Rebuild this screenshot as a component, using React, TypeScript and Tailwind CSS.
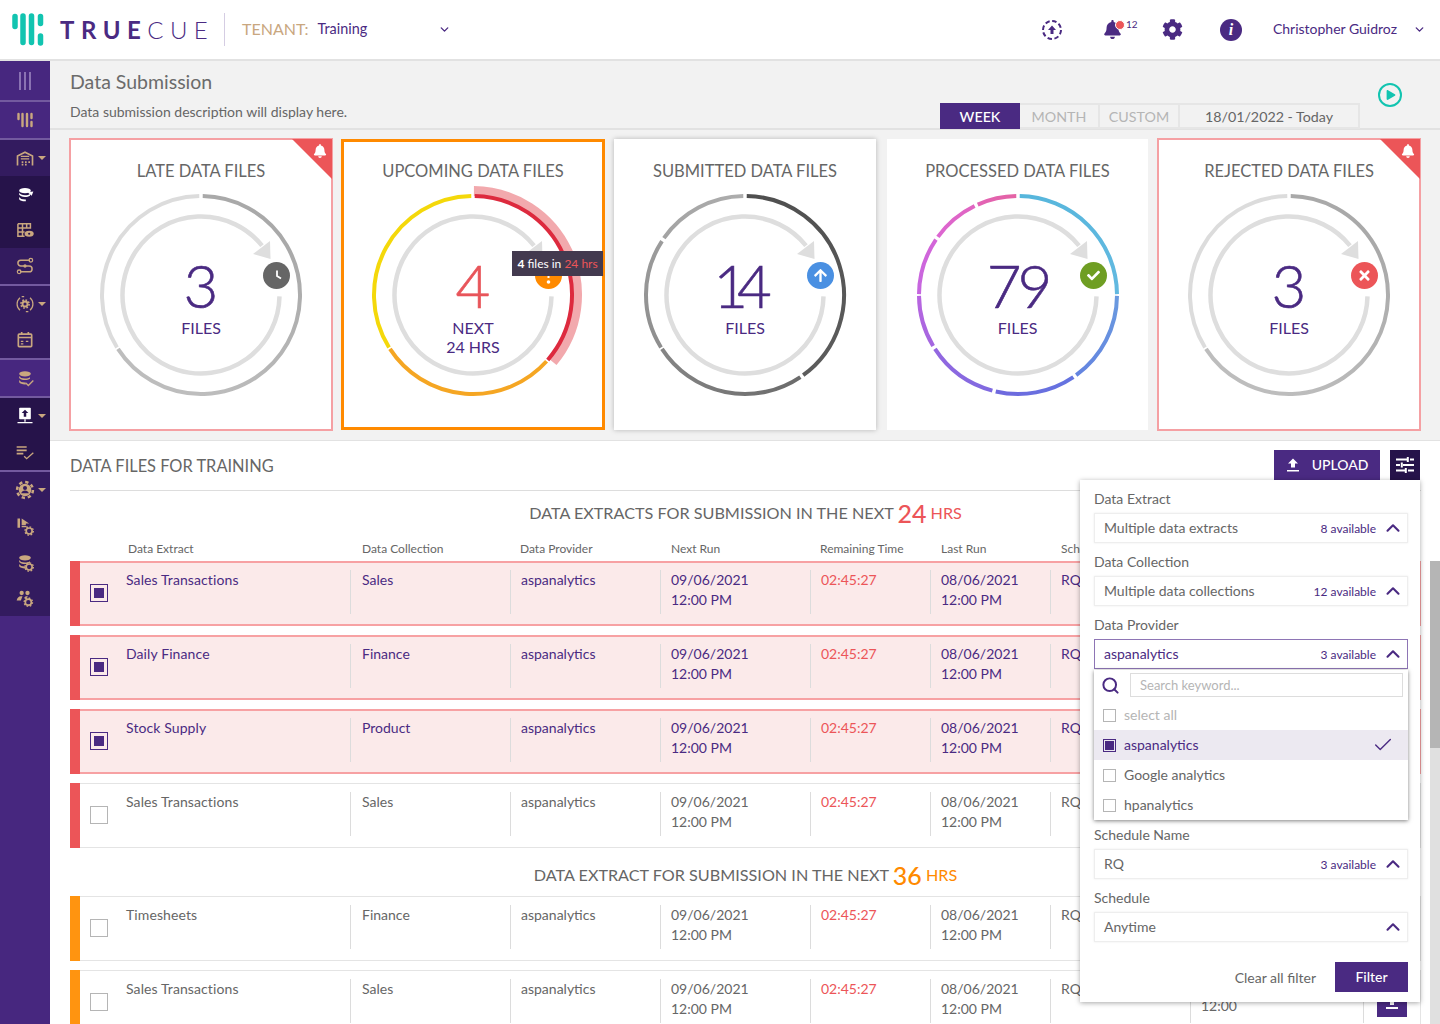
import React from 'react';
import { FaBell, FaCog, FaCheck, FaArrowUp, FaTimes, FaPlay } from 'react-icons/fa';
import { ChevronDown, ChevronUp, Search, Check } from 'lucide-react';

const PURPLE = '#4a2a82';
const TAN = '#c9a77f';

const polar = (r: number, deg: number) => {
  const a = ((deg - 90) * Math.PI) / 180;
  return [115 + r * Math.cos(a), 115 + r * Math.sin(a)];
};

const arc = (r: number, from: number, to: number) => {
  const [x1, y1] = polar(r, from);
  const [x2, y2] = polar(r, to);
  return `M${x1} ${y1}A${r} ${r} 0 ${to - from > 180 ? 1 : 0} 1 ${x2} ${y2}`;
};

type Seg = { from: number; to: number; c1: string; c2?: string; r?: number; w?: number };

const Gauge = ({ id, segs }: { id: string; segs: Seg[] }) => (
  <svg width="230" height="230" viewBox="0 0 230 230" className="block">
    <defs>
      {segs.map((s, i) => {
        const [x1, y1] = polar(s.r ?? 99, s.from);
        const [x2, y2] = polar(s.r ?? 99, s.to);
        return (
          <linearGradient key={i} id={`${id}${i}`} gradientUnits="userSpaceOnUse" x1={x1} y1={y1} x2={x2} y2={y2}>
            <stop offset="0" stopColor={s.c1} />
            <stop offset="1" stopColor={s.c2 ?? s.c1} />
          </linearGradient>
        );
      })}
    </defs>
    {segs.map((s, i) => (
      <path key={i} d={arc(s.r ?? 99, s.from, s.to)} fill="none" stroke={`url(#${id}${i})`} strokeWidth={s.w ?? 4} />
    ))}
    <path d={arc(78.5, 91, 411)} fill="none" stroke="#dedede" strokeWidth="4.5" />
    <path d="M184 61 L184.5 79 L167 74 Z" fill="#dedede" />
  </svg>
);

const StatusDot = ({ className, children }: { className: string; children: React.ReactNode }) => (
  <div className={`absolute left-[177px] top-[82px] w-[27px] h-[27px] rounded-full flex items-center justify-center text-white ${className}`}>
    {children}
  </div>
);

const Corner = () => (
  <div className="absolute top-0 right-0 w-[40px] h-[40px] bg-[#ec5558] [clip-path:polygon(0_0,100%_0,100%_100%)]">
    <FaBell className="absolute top-[5px] right-[5px] text-white" size={14} />
  </div>
);

const Center = ({ n, lines, color = 'text-[#4a2a82]', nClass = '' }: { n: string; lines: string[]; color?: string; nClass?: string }) => (
  <div className="absolute left-0 right-0 top-[75px] text-center">
    <div className={`text-[60px] leading-[60px] font-light [-webkit-text-stroke:0.6px_currentColor] ${color} ${nClass}`}>{n}</div>
    <div className="mt-[3px] text-[16px] leading-[19px] text-[#4a2a82]">
      {lines.map((l) => (
        <div key={l}>{l}</div>
      ))}
    </div>
  </div>
);

const Card = ({ title, className, alert, children }: { title: string; className: string; alert?: boolean; children: React.ReactNode }) => (
  <div className={`relative h-[291px] flex flex-col items-center bg-white ${className}`}>
    {alert && <Corner />}
    <div className="h-[41px] pt-[21px] text-[16.5px] leading-[22px] text-[#666] whitespace-nowrap">{title}</div>
    <div className="relative w-[230px] h-[230px]">{children}</div>
  </div>
);

const Sb = ({ children, size = 20 }: { children: React.ReactNode; size?: number }) => (
  <svg width={size} height={size} viewBox="0 0 24 24" className="block">
    {children}
  </svg>
);

const SmallGear = ({ x, y, c = TAN }: { x: number; y: number; c?: string }) => (
  <g>
    <circle cx={x} cy={y} r="3.6" fill="none" stroke={c} strokeWidth="2" />
    <circle cx={x} cy={y} r="5" fill="none" stroke={c} strokeWidth="1.6" strokeDasharray="2 1.9" />
  </g>
);

const Db = ({ c = TAN }: { c?: string }) => (
  <g fill={c}>
    <ellipse cx="10" cy="6" rx="7" ry="3.2" />
    <path d="M3 8.500c1 2 3.600 3 7 3 3 0 4.500-.500 6-1.500v2c-1.500 1-3.500 1.500-6 1.500-3.400 0-6-1-7-2.500z" />
    <path d="M3 13.500c1 2 3.600 3 7 3l1 0v2.200l-1 .1c-3.400 0-6-1-7-2.600z" />
  </g>
);

const sideIcons: Record<string, React.ReactNode> = {
  menu: (
    <Sb size={24}>
      <path d="M7 3v18M12 3v18M17 3v18" stroke="#9b86c0" strokeWidth="1.6" />
    </Sb>
  ),
  logo: (
    <Sb size={24}>
      <path d="M5.500 6v5M9.500 6v12M14 6v12M18.500 6v4M18.500 14v4" stroke={TAN} strokeWidth="2.400" strokeLinecap="round" />
    </Sb>
  ),
  warehouse: (
    <Sb>
      <path d="M3 21V9.500L12 5l9 4.500V21" fill="none" stroke={TAN} strokeWidth="2" />
      <path d="M7 10h10M7 13h10" stroke={TAN} strokeWidth="1.500" />
      <path d="M8 16h2v2H8zM12 16h2v2h-2zM16 16h2v2h-2zM8 19h2v2H8zM12 19h2v2h-2z" fill={TAN} />
    </Sb>
  ),
  db: (
    <Sb>
      <g transform="translate(2 2)">
        <Db c="#fff" />
      </g>
      <path d="M15 10l7-1-2 5z" fill="#fff" />
    </Sb>
  ),
  grid: (
    <Sb>
      <path d="M3.500 4.500h15v6M3.500 4.500v15h8M3.500 9.500h15M3.500 14.500h8M9 4.500v15M14 4.500v5" fill="none" stroke={TAN} strokeWidth="1.800" />
      <ellipse cx="17" cy="16.500" rx="5.500" ry="3.500" fill={TAN} />
      <circle cx="17" cy="16.500" r="1.300" fill="#26134a" />
    </Sb>
  ),
  route: (
    <Sb>
      <path d="M6 19h11a3.200 3.200 0 0 0 0-7H7a3.200 3.200 0 0 1 0-7h11" fill="none" stroke={TAN} strokeWidth="1.800" />
      <circle cx="19" cy="5" r="2.200" fill="none" stroke={TAN} strokeWidth="1.500" />
      <circle cx="12" cy="12" r="2" fill={TAN} />
      <circle cx="5" cy="19" r="2.200" fill="none" stroke={TAN} strokeWidth="1.500" />
    </Sb>
  ),
  gearRing: (
    <Sb>
      <path d="M6 4.500A9.800 9.800 0 0 0 6 19.500M18 4.500A9.800 9.800 0 0 1 18 19.500M8 3l3 0M13 21l3 0" fill="none" stroke={TAN} strokeWidth="1.500" />
      <g transform="translate(6 6) scale(.75)">
        <circle cx="8" cy="8" r="4" fill="none" stroke={TAN} strokeWidth="3" />
        <circle cx="8" cy="8" r="6.500" fill="none" stroke={TAN} strokeWidth="2.600" strokeDasharray="2.600 2.500" />
      </g>
    </Sb>
  ),
  calendar: (
    <Sb>
      <rect x="4" y="5" width="16" height="15" rx="1" fill="none" stroke={TAN} strokeWidth="2" />
      <path d="M4 9h16M8 2.500V6M16 2.500V6" stroke={TAN} strokeWidth="2" />
      <path d="M7 13h3v1.500H7zM13 13h3v1.500h-3zM7 16h3v1.500H7z" fill={TAN} />
    </Sb>
  ),
  dbCheck: (
    <Sb>
      <g transform="translate(2 1)">
        <Db />
      </g>
      <path d="M13 18l3 3 6-6" fill="none" stroke={TAN} strokeWidth="1.600" />
    </Sb>
  ),
  upload: (
    <Sb>
      <rect x="5" y="2" width="14" height="14" rx="1" fill="#fff" />
      <path d="M12 4.500l4 4h-2.500V13h-3V8.500H8z" fill="#26134a" />
      <path d="M12 16v3M3 20h18" stroke="#fff" strokeWidth="1.600" />
    </Sb>
  ),
  listCheck: (
    <Sb>
      <path d="M2 6h12M2 10h12M2 14h8" stroke={TAN} strokeWidth="2" />
      <path d="M11 17l3 3 8-7" fill="none" stroke={TAN} strokeWidth="1.600" />
    </Sb>
  ),
  gearUser: (
    <Sb>
      <circle cx="12" cy="12" r="7.500" fill={TAN} />
      <circle cx="12" cy="12" r="9.500" fill="none" stroke={TAN} strokeWidth="3" strokeDasharray="4 3.450" />
      <circle cx="12" cy="9.500" r="2.400" fill="#331b5f" />
      <path d="M7.500 16c.5-2.500 2.500-3.500 4.500-3.500s4 1 4.500 3.500z" fill="#331b5f" />
    </Sb>
  ),
  flagGear: (
    <Sb>
      <path d="M3 3h3v11H3zM8 3l9 6h-4v2H8z" fill={TAN} />
      <path d="M8 12h6v1.500H8z" fill={TAN} />
      <SmallGear x={17} y={18} />
    </Sb>
  ),
  dbGear: (
    <Sb>
      <g transform="translate(2 1)">
        <Db />
      </g>
      <SmallGear x={17} y={18} />
    </Sb>
  ),
  usersGear: (
    <Sb>
      <circle cx="8" cy="6" r="2.600" fill={TAN} />
      <circle cx="15" cy="6" r="2.600" fill={TAN} />
      <path d="M2 15c.5-3 2.500-5 5-5l2 0-2 5zM11 12c.5-1.500 2-2.500 4-2.500v1.500c-1.500.5-2 1.500-2.500 2.500z" fill={TAN} />
      <SmallGear x={16} y={17} />
    </Sb>
  ),
};

const sideItems = [
  { k: 'menu', h: 'h-[39px]', bg: 'bg-[#47277f]' },
  { k: 'line' },
  { k: 'logo', h: 'h-[36px]', bg: 'bg-[#47277f]' },
  { k: 'line' },
  { k: 'warehouse', h: 'h-[36px]', bg: 'bg-[#331b5f]', caret: true },
  { k: 'db', h: 'h-[36px]', bg: 'bg-[#26134a]' },
  { k: 'grid', h: 'h-[36px]', bg: 'bg-[#26134a]' },
  { k: 'route', h: 'h-[36px]', bg: 'bg-[#331b5f]' },
  { k: 'line' },
  { k: 'gearRing', h: 'h-[36px]', bg: 'bg-[#331b5f]', caret: true },
  { k: 'calendar', h: 'h-[36px]', bg: 'bg-[#331b5f]' },
  { k: 'line' },
  { k: 'dbCheck', h: 'h-[36px]', bg: 'bg-[#47277f]' },
  { k: 'line' },
  { k: 'upload', h: 'h-[36px]', bg: 'bg-[#26134a]', caret: true },
  { k: 'listCheck', h: 'h-[36px]', bg: 'bg-[#26134a]' },
  { k: 'line' },
  { k: 'gearUser', h: 'h-[36px]', bg: 'bg-[#331b5f]', caret: true },
  { k: 'flagGear', h: 'h-[36px]', bg: 'bg-[#331b5f]' },
  { k: 'dbGear', h: 'h-[36px]', bg: 'bg-[#331b5f]' },
  { k: 'usersGear', h: 'h-[36px]', bg: 'bg-[#331b5f]' },
];

const Sidebar = () => (
  <div className="w-[50px] shrink-0 h-full flex flex-col bg-[#47277f]">
    {sideItems.map((it, i) =>
      it.k === 'line' ? (
        <div key={i} className="h-[2px] bg-[#735a9f]" />
      ) : (
        <div key={i} className={`relative flex items-center justify-center ${it.h} ${it.bg}`}>
          {sideIcons[it.k]}
          {it.caret && (
            <div className="absolute left-[38px] top-1/2 -mt-[2px] w-0 h-0 border-x-[4px] border-x-transparent border-t-[4px] border-t-[#c9a77f]" />
          )}
        </div>
      )
    )}
  </div>
);

const Header = () => (
  <div className="h-[61px] shrink-0 bg-white border-b-2 border-[#e2e2e2] flex items-center pl-[12px] pr-[14px] text-[#4a2a82]">
    <svg width="32" height="33" viewBox="0 0 32 33" className="block shrink-0">
      <g stroke="#12c4b0" strokeWidth="5.500" strokeLinecap="round" fill="none">
        <path d="M3 3.500v10M11 3v26.500M19.500 3v26.500M28.500 3.500v7M28.500 23v7" />
      </g>
    </svg>
    <div className="ml-[16px] text-[24px] leading-none tracking-[0.27em] whitespace-nowrap w-[164px]">
      <span className="font-bold">TRUE</span>
      <span className="font-light">CUE</span>
    </div>
    <div className="w-px h-[33px] bg-[#d5cde3]" />
    <div className="ml-[17px] text-[16px] text-[#c9a77f] -mt-[2px]">TENANT:</div>
    <div className="ml-[9px] w-[120px] text-[14.4px] -mt-[2px]">Training</div>
    <ChevronDown size={13} strokeWidth={2.500} />
    <div className="flex-1" />
    <svg width="24" height="24" viewBox="0 0 24 24" className="block">
      <circle cx="12" cy="12" r="9" fill="none" stroke={PURPLE} strokeWidth="2" strokeDasharray="4.500 2.550" />
      <path d="M12 7.500l4 4.500h-2.500v4h-3v-4H8z" fill={PURPLE} />
    </svg>
    <div className="relative ml-[37px] w-[24px] h-[24px] flex items-center justify-center">
      <FaBell size={19} />
      <div className="absolute left-[14px] top-[2px] w-[8px] h-[8px] rounded-full bg-[#ec5558] border border-white box-content" />
      <div className="absolute left-[25px] top-[-1px] text-[10px] leading-[14px]">12</div>
    </div>
    <FaCog size={21} className="ml-[37px]" />
    <div className="ml-[37px] w-[22px] h-[22px] rounded-full bg-[#4a2a82] flex items-center justify-center text-white font-[Liberation_Serif,serif] italic font-bold text-[16px] leading-none">
      i
    </div>
    <div className="ml-[31px] text-[14px] whitespace-nowrap -mt-[2px]">Christopher Guidroz</div>
    <ChevronDown size={13} strokeWidth={2.500} className="ml-[16px]" />
  </div>
);

const SubHeader = () => (
  <div className="h-[69px] flex items-end justify-between border-b-2 border-[#e2e2e2] pl-[20px] pr-[38px]">
    <div className="self-start">
      <div className="mt-[9px] text-[19.5px] leading-[24px] text-[#6b6b6b]">Data Submission</div>
      <div className="mt-[8px] text-[14px] leading-[20px] text-[#666]">Data submission description will display here.</div>
    </div>
    <div className="flex-1" />
    <div className="flex h-[26px] text-[14.25px] text-[#b5b5b5] -mb-[1px]">
      <div className="w-[80px] bg-[#4a2a82] text-white flex items-center justify-center font-medium pt-[2px]">WEEK</div>
      <div className="w-[80px] border-2 border-l-0 border-[#e6e6e6] flex items-center justify-center pt-[2px]">MONTH</div>
      <div className="w-[80px] border-2 border-l-0 border-[#e6e6e6] flex items-center justify-center pt-[2px]">CUSTOM</div>
      <div className="w-[180px] border-2 border-l-0 border-[#e6e6e6] flex items-center justify-center text-[#666] pt-[2px]">18/01/2022 - Today</div>
    </div>
    <div className="self-start mt-[22px] ml-[18px] w-[24px] h-[24px] rounded-full border-[2.500px] border-[#12c4b0] flex items-center justify-center">
      <FaPlay size={10} className="text-[#12c4b0] ml-[2px]" />
    </div>
  </div>
);

const lateSegs: Seg[] = [
  { from: 1, to: 237, c1: '#a9a9a9', c2: '#bdbdbd' },
  { from: 238, to: 359, c1: '#dcdcdc' },
];
const upcomingSegs: Seg[] = [
  { from: 0.5, to: 130, c1: '#f2a9ad', r: 104, w: 10 },
  { from: 1, to: 131, c1: '#dd2a3e' },
  { from: 132, to: 237, c1: '#f5a623' },
  { from: 238, to: 359, c1: '#f4d80a' },
];
const submittedSegs: Seg[] = [
  { from: 1, to: 144, c1: '#4f4f4f', c2: '#5c5c5c' },
  { from: 146, to: 237, c1: '#6b6b6b', c2: '#858585' },
  { from: 238, to: 303, c1: '#8e8e8e', c2: '#9c9c9c' },
  { from: 305, to: 359, c1: '#a3a3a3', c2: '#adadad' },
];
const processedSegs: Seg[] = [
  { from: 1, to: 89.500, c1: '#56b6dc', c2: '#62b9e0' },
  { from: 90.500, to: 144, c1: '#6a9adf', c2: '#6484e0' },
  { from: 146, to: 193, c1: '#6474e0', c2: '#6f69de' },
  { from: 195, to: 237, c1: '#7f6ae0', c2: '#9467e0' },
  { from: 239, to: 269.500, c1: '#a367e0', c2: '#b965e0' },
  { from: 270.500, to: 304, c1: '#c566e0', c2: '#d466d8' },
  { from: 306, to: 334, c1: '#dc66d2', c2: '#e065c0' },
  { from: 336, to: 359, c1: '#e263b5', c2: '#e463a4' },
];
const rejectedSegs = lateSegs;

const Cards = () => (
  <div className="flex items-start pl-[20px] pt-[9px]">
    <Card title="LATE DATA FILES" alert className="w-[262px] outline-2 -outline-offset-1 outline-[#f5a0a3]">
      <Gauge id="a" segs={lateSegs} />
      <Center n="3" lines={['FILES']} />
      <StatusDot className="bg-[#666]">
        <svg width="16" height="16" viewBox="0 0 16 16">
          <path d="M8 2.500V8l4 2.500" fill="none" stroke="#fff" strokeWidth="1.800" />
        </svg>
      </StatusDot>
    </Card>
    <Card title="UPCOMING DATA FILES" className="ml-[9px] w-[264px] outline-[3px] -outline-offset-[3px] outline-[#ff8a00]">
      <Gauge id="b" segs={upcomingSegs} />
      <Center n="4" lines={['NEXT', '24 HRS']} color="text-[#e8555a]" />
      <StatusDot className="bg-[#ff8a00]">
        <svg width="27" height="27" viewBox="0 0 27 27">
          <path d="M12.500 5h2v11h-2z" fill="#fff" />
          <circle cx="13.500" cy="20" r="1.800" fill="#fff" />
        </svg>
      </StatusDot>
      <div className="absolute left-[154px] top-[71px] w-[91px] h-[25px] bg-[#433a4f] text-[12px] leading-[25px] text-center text-white whitespace-nowrap">
        <span className="font-bold">4</span> files in <span className="text-[#ec5558]">24 hrs</span>
      </div>
    </Card>
    <Card title="SUBMITTED DATA FILES" className="ml-[9px] w-[262px] shadow-[0_0_5px_rgba(0,0,0,0.25)]">
      <Gauge id="c" segs={submittedSegs} />
      <Center n="14" lines={['FILES']} nClass="tracking-[-11px] -translate-x-[8px]" />
      <StatusDot className="bg-[#4a90e2]">
        <FaArrowUp size={15} />
      </StatusDot>
    </Card>
    <Card title="PROCESSED DATA FILES" className="ml-[11px] w-[261px]">
      <Gauge id="d" segs={processedSegs} />
      <Center n="79" lines={['FILES']} nClass="tracking-[-4px]" />
      <StatusDot className="bg-[#6f9e23]">
        <FaCheck size={13} />
      </StatusDot>
    </Card>
    <Card title="REJECTED DATA FILES" alert className="ml-[10px] w-[262px] outline-2 -outline-offset-1 outline-[#f5a0a3]">
      <Gauge id="e" segs={rejectedSegs} />
      <Center n="3" lines={['FILES']} />
      <StatusDot className="bg-[#ec5558]">
        <FaTimes size={15} />
      </StatusDot>
    </Card>
  </div>
);

const Box = ({ on }: { on: boolean }) => (
  <div className={`w-[18px] h-[18px] border flex items-center justify-center ${on ? 'border-[#4a2a82]' : 'border-[#b5b5b5]'}`}>
    {on && <div className="w-[10px] h-[10px] bg-[#4a2a82]" />}
  </div>
);

type RowT = { name: string; coll: string; on?: boolean; tone: 'red' | 'orange'; last?: boolean };

const Cell = ({ w, children }: { w: string; children?: React.ReactNode }) => (
  <div className={`${w} shrink-0 h-[44px] border-l border-[#dcdcdc] pl-[10px] leading-[20px]`}>{children}</div>
);

const Row = ({ r }: { r: RowT }) => (
  <div className="flex h-[65px] mb-[9px] text-[14px]">
    <div className={`w-[10px] shrink-0 ${r.tone === 'red' ? 'bg-[#ec5558]' : 'bg-[#ff9410]'}`} />
    <div
      className={`flex-1 flex ${
        r.on
          ? 'border-y-2 border-r-2 border-[#f7a1a3] bg-[#fbeaea] py-[7px] text-[#4a2a82]'
          : 'border-y border-r border-[#e4e4e4] bg-white py-[8px] text-[#666]'
      }`}
    >
      <div className="w-[270px] shrink-0 flex leading-[20px]">
        <div className="ml-[10px] mt-[14px]">
          <Box on={!!r.on} />
        </div>
        <div className="ml-[18px] tracking-[0.1px]">{r.name}</div>
      </div>
      <Cell w="w-[160px]">
        <span className="ml-[1px]">{r.coll}</span>
      </Cell>
      <Cell w="w-[150px]">aspanalytics</Cell>
      <Cell w="w-[150px]">
        09/06/2021
        <br />
        12:00 PM
      </Cell>
      <Cell w="w-[120px]">
        <span className="text-[#ec5558]">02:45:27</span>
      </Cell>
      <Cell w="w-[120px]">
        08/06/2021
        <br />
        12:00 PM
      </Cell>
      <Cell w="w-[140px]">RQ</Cell>
      <Cell w="w-[173px]">{r.last && <div className="mt-[17px]">12:00</div>}</Cell>
      <Cell w="w-[56px]">
        <div className="ml-[3px] mt-[8px] w-[30px] h-[30px] bg-[#4a2a82] flex items-center justify-center">
          <svg width="16" height="16" viewBox="0 0 16 16">
            <path d="M8 1l5 5H10v5H6V6H3zM2 13h12v2H2z" fill="#fff" />
          </svg>
        </div>
      </Cell>
    </div>
  </div>
);

const Field = ({ label, value, avail, active }: { label: string; value: string; avail?: string; active?: boolean }) => (
  <div>
    <div className="h-[20px] text-[14px] leading-[20px] text-[#666]">{label}</div>
    <div
      className={`mt-[4px] h-[30px] flex items-center pl-[9px] pr-[3px] text-[14px] border ${
        active ? 'border-[#8e75b5] text-[#4a2a82]' : 'border-[#eee] text-[#666] shadow-[0_0_2px_rgba(0,0,0,0.08)]'
      }`}
    >
      <span className="flex-1 -mt-[2px]">{value}</span>
      {avail && <span className="text-[12px] text-[#4a2a82] mr-[6px] mt-[1px]">{avail}</span>}
      <ChevronUp size={22} strokeWidth={2.300} className="text-[#4a2a82]" />
    </div>
  </div>
);

const Option = ({ label, on, muted }: { label: string; on?: boolean; muted?: boolean }) => (
  <div className={`h-[30px] flex items-center pl-[9px] pr-[14px] text-[14px] ${on ? 'bg-[#ece9f1] text-[#4a2a82]' : muted ? 'text-[#b5b5b5]' : 'text-[#666]'}`}>
    <div className={`w-[13px] h-[13px] border flex items-center justify-center ${on ? 'border-[#4a2a82]' : 'border-[#b5b5b5]'}`}>
      {on && <div className="w-[9px] h-[9px] bg-[#4a2a82]" />}
    </div>
    <span className="ml-[8px] flex-1 -mt-[2px]">{label}</span>
    {on && <Check size={22} strokeWidth={1.500} />}
  </div>
);

const FilterPanel = () => (
  <div className="absolute left-[1030px] top-[39px] w-[340px] h-[522px] bg-white shadow-[0_1px_5px_rgba(0,0,0,0.35)] px-[12px] pt-[9px] pr-[12px]">
    <div className="flex flex-col gap-[9px] pl-[2px]">
      <Field label="Data Extract" value="Multiple data extracts" avail="8 available" />
      <Field label="Data Collection" value="Multiple data collections" avail="12 available" />
    </div>
    <div className="mt-[9px] pl-[2px]">
      <Field label="Data Provider" value="aspanalytics" avail="3 available" active />
      <div className="mt-[1px] h-[150px] bg-white shadow-[0_1px_4px_rgba(0,0,0,0.5)]">
        <div className="h-[30px] flex items-center pl-[7px] pr-[5px]">
          <Search size={19} strokeWidth={2.500} className="text-[#4a2a82]" />
          <div className="ml-[10px] flex-1 h-[24px] border border-[#ddd] pl-[9px] text-[13px] leading-[22px] text-[#b5b5b5]">Search keyword...</div>
        </div>
        <Option label="select all" muted />
        <Option label="aspanalytics" on />
        <Option label="Google analytics" />
        <Option label="hpanalytics" />
      </div>
    </div>
    <div className="mt-[5px] flex flex-col gap-[9px] pl-[2px]">
      <Field label="Schedule Name" value="RQ" avail="3 available" />
      <Field label="Schedule" value="Anytime" />
    </div>
    <div className="mt-[20px] pl-[2px] flex items-center justify-end">
      <span className="text-[14px] text-[#666] mr-[19px]">Clear all filter</span>
      <div className="w-[73px] h-[30px] bg-[#4a2a82] text-white text-[14px] flex items-center justify-center font-medium pb-[2px]">Filter</div>
    </div>
  </div>
);

const Heading = ({ text, n, color, mt }: { text: string; n: string; color: string; mt: string }) => (
  <div className={`${mt} h-[40px] flex items-center justify-center text-[16.2px] text-[#666] whitespace-nowrap`}>
    {text}&nbsp;
    <span className={`text-[25px] leading-none font-medium ${color}`}>{n}</span>
    &nbsp;
    <span className={color}>HRS</span>
  </div>
);

const Table = () => (
  <div className="relative flex-1 overflow-hidden bg-white border-t border-[#e2e2e2]">
    <div className="w-[1351px] ml-[20px]">
      <div className="h-[50px] flex items-center justify-between border-b border-[#ddd]">
        <span className="text-[16.4px] text-[#666] mt-[2px]">DATA FILES FOR TRAINING</span>
        <div className="flex gap-[10px] mb-[1px]">
          <div className="w-[106px] h-[30px] bg-[#4a2a82] text-white text-[14px] flex items-center justify-center gap-[12px] font-medium">
            <svg width="14" height="14" viewBox="0 0 14 14">
              <path d="M7 .5l5 5H9v4H5v-4H2zM1 12h12v1.500H1z" fill="#fff" />
            </svg>
            <span className="-mt-[2px]">UPLOAD</span>
          </div>
          <div className="w-[30px] h-[30px] bg-[#26134a] flex items-center justify-center mr-[1px]">
            <svg width="20" height="20" viewBox="0 0 20 20">
              <path d="M1 4.500h11M15 4.500h4M1 10h4M8 10h11M1 15.500h9M13 15.500h6M12.800 2v5M6.800 7.500v5M10.800 13v5" stroke="#fff" strokeWidth="2" fill="none" />
            </svg>
          </div>
        </div>
      </div>
      <Heading text="DATA EXTRACTS FOR SUBMISSION IN THE NEXT" n="24" color="text-[#ec5558]" mt="mt-[2px]" />
      <div className="flex h-[28px] pt-[7px] text-[12px] leading-[18px] text-[#666]">
        <div className="w-[292px] pl-[58px]">Data Extract</div>
        <div className="w-[158px]">Data Collection</div>
        <div className="w-[151px]">Data Provider</div>
        <div className="w-[149px]">Next Run</div>
        <div className="w-[121px]">Remaining Time</div>
        <div className="w-[120px]">Last Run</div>
        <div>Schedule Name</div>
      </div>
      <Row r={{ name: 'Sales Transactions', coll: 'Sales', on: true, tone: 'red' }} />
      <Row r={{ name: 'Daily Finance', coll: 'Finance', on: true, tone: 'red' }} />
      <Row r={{ name: 'Stock Supply', coll: 'Product', on: true, tone: 'red' }} />
      <Row r={{ name: 'Sales Transactions', coll: 'Sales', tone: 'red' }} />
      <Heading text="DATA EXTRACT FOR SUBMISSION IN THE NEXT" n="36" color="text-[#ff8a00]" mt="-mt-[2px] mb-[1px]" />
      <Row r={{ name: 'Timesheets', coll: 'Finance', tone: 'orange' }} />
      <Row r={{ name: 'Sales Transactions', coll: 'Sales', tone: 'orange', last: true }} />
    </div>
    <FilterPanel />
    <div className="absolute right-0 top-[120px] bottom-0 w-[10px] flex flex-col bg-[#e0e0e0]">
      <div className="h-[187px] bg-[#b5b5b5]" />
    </div>
  </div>
);

export default function App() {
  return (
    <div className="w-[1440px] h-[1024px] overflow-hidden flex flex-col bg-white font-[Lato,sans-serif]">
      <Header />
      <div className="flex-1 flex min-h-0">
        <Sidebar />
        <div className="flex-1 flex flex-col min-w-0">
          <div className="h-[379px] shrink-0 bg-[#f2f2f2]">
            <SubHeader />
            <Cards />
          </div>
          <Table />
        </div>
      </div>
    </div>
  );
}
